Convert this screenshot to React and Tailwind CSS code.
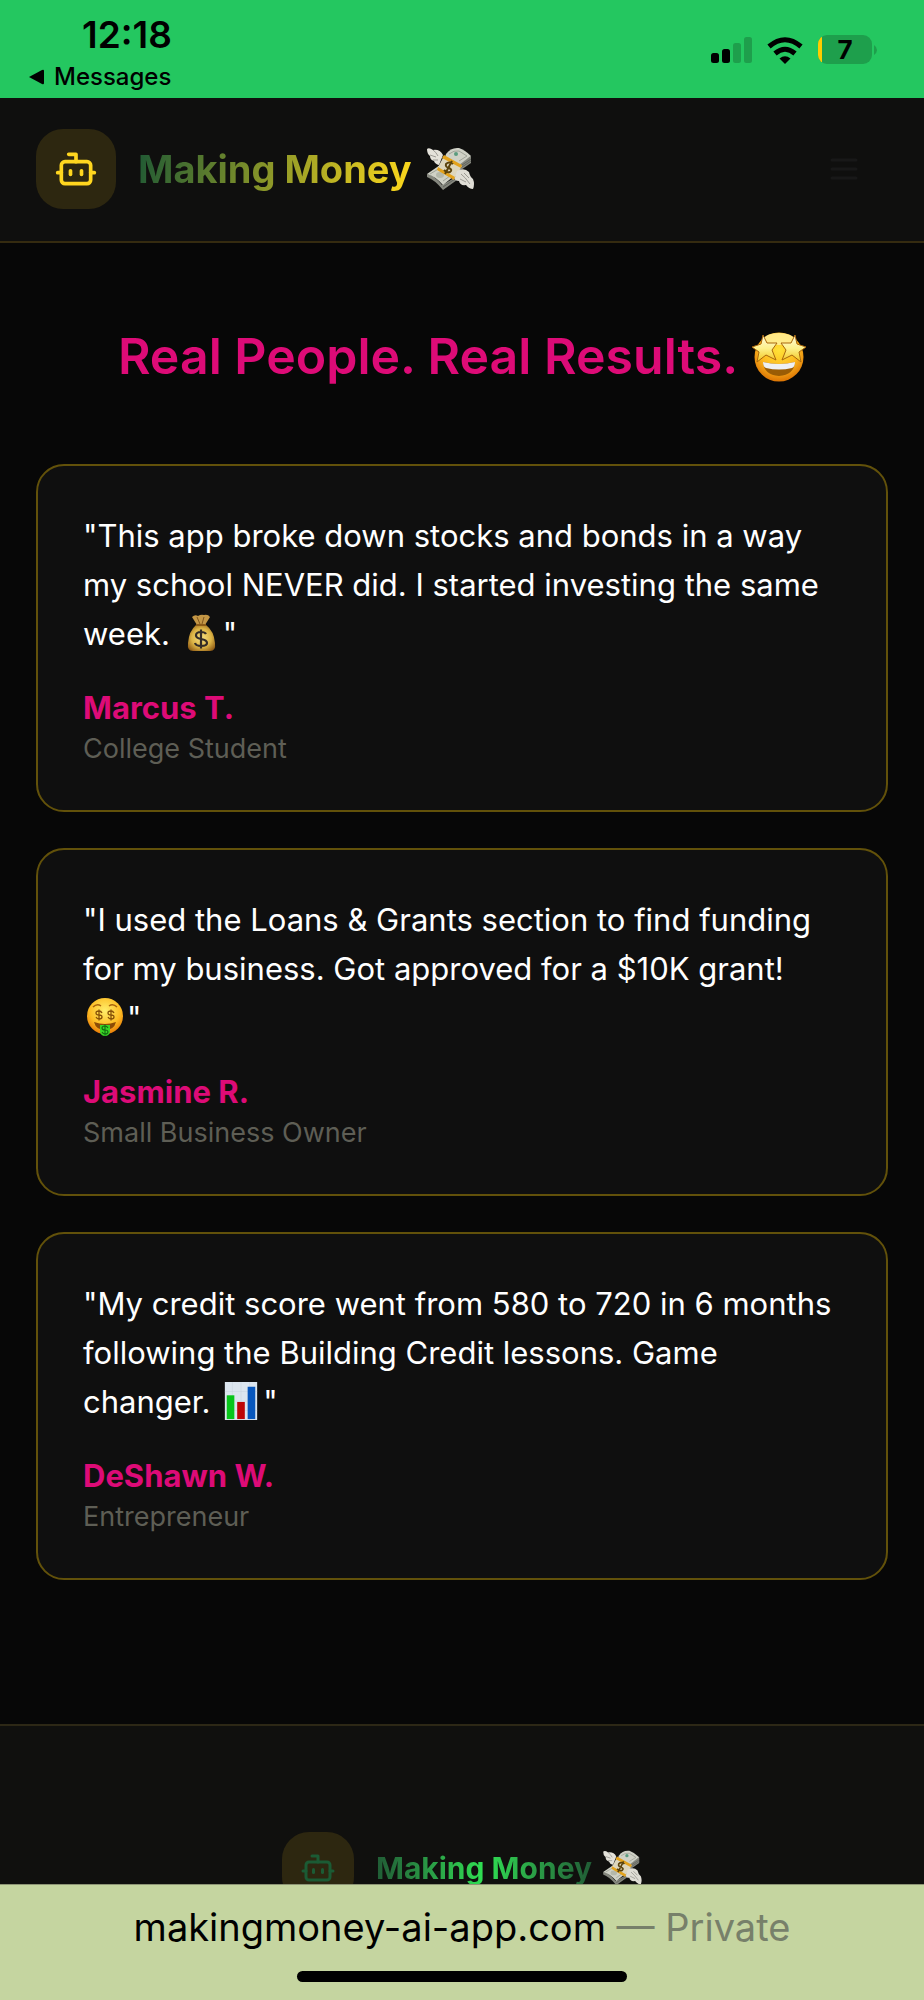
import { Bot } from "lucide-react";

const testimonials = [
  {
    quote: "This app broke down stocks and bonds in a way my school NEVER did. I started investing the same week.",
    Emoji: MoneyBag,
    name: "Marcus T.",
    role: "College Student",
  },
  {
    quote: "I used the Loans & Grants section to find funding for my business. Got approved for a $10K grant!",
    Emoji: MoneyFace,
    name: "Jasmine R.",
    role: "Small Business Owner",
  },
  {
    quote: "My credit score went from 580 to 720 in 6 months following the Building Credit lessons. Game changer.",
    Emoji: BarChart,
    name: "DeShawn W.",
    role: "Entrepreneur",
  },
];

function FlyingMoney({ className }) {
  return (
    <svg viewBox="0 0 48 44" className={className} role="img" aria-label="money with wings">
      {/* bundle */}
      <path d="M1 27 Q8 28 16 38 L30 30 L31 33 L17 43 Q9 33 1 30 Z" fill="#85877e" />
      <path d="M1 27 L14 18 L28 29 L17 38 Q9 29 1 27 Z" fill="#cfd1c6" />
      <path d="M4 27 L14 21 L24 29 L17 34" fill="none" stroke="#a0a398" strokeWidth="1" />
      <path d="M33 17 L45 9 V16 L32 25 Z" fill="#85877e" />
      <path d="M20 7 Q25 0 33 1 Q39 3 45 9 L33 18 L19 10 Z" fill="#cfd1c6" />
      <path d="M23 7 Q28 3 33 4 L41 9 L33 14" fill="none" stroke="#a0a398" strokeWidth="1" />
      <path d="M33 20 L45 12 M33 22 L45 14 M17 40 L29 32" stroke="#62655e" strokeWidth="1" />
      <circle cx="30" cy="7" r="2" fill="#5b9c80" />
      <ellipse cx="14" cy="28" rx="4" ry="3" fill="#b4b8ab" />
      {/* paper band */}
      <path d="M18 9 L36 19 L28 32 L11 22 Z" fill="#ddd6bd" />
      <path d="M18 8 L36 18 L35 21 L16 11 Z" fill="#e3a21c" />
      <path d="M12 20 L29 30 L28 33 L11 23 Z" fill="#e3a21c" />
      <path
        d="M27 17 Q23 14 20 17 Q19 20 23 21 Q27 23 24 25 Q21 26 18 23 M26 14 L19 27"
        fill="none"
        stroke="#5b430d"
        strokeWidth="2"
      />
      {/* wings */}
      <path d="M1 2 Q3 0 7 3 Q14 2 17 8 L13 18 Q9 17 8 14 Q4 13 4 9 Q1 7 1 2 Z" fill="#e4e2da" />
      <path d="M7 3 Q10 5 12 9 M4 8 L10 10 M7 13 L12 13" stroke="#9c9a93" strokeWidth="1" fill="none" />
      <path d="M31 24 Q38 20 43 25 Q44 30 47 32 Q49 37 47 42 Q43 42 40 38 Q34 39 33 34 Q28 34 29 30 Z" fill="#dfddd5" />
      <path d="M35 27 Q39 30 44 37 M34 32 L40 35 M38 26 L43 31" stroke="#9b9992" strokeWidth="1" fill="none" />
    </svg>
  );
}

function StarStruck({ className }) {
  return (
    <svg viewBox="0 0 54 50" className={className} role="img" aria-label="star-struck">
      <defs>
        <radialGradient id="starFace" cx="50%" cy="36%" r="64%">
          <stop offset="0" stopColor="#ffe237" />
          <stop offset="0.6" stopColor="#fdb81f" />
          <stop offset="1" stopColor="#dc7404" />
        </radialGradient>
        <linearGradient id="starFill" x1="0" y1="0" x2="0" y2="1">
          <stop offset="0" stopColor="#fffbe0" />
          <stop offset="0.5" stopColor="#fdf08a" />
          <stop offset="1" stopColor="#f2c41c" />
        </linearGradient>
      </defs>
      <circle cx="27" cy="25" r="24.5" fill="url(#starFace)" />
      <ellipse cx="27" cy="7" rx="15" ry="6" fill="#fff2a0" opacity="0.8" />
      <path d="M11 30 Q27 34 43 30 Q42 43 27 44 Q12 43 11 30 Z" fill="#9a5c05" />
      <path d="M11 30 Q27 34 43 30 Q43 35 40 36 Q27 39 14 36 Q11 35 11 30 Z" fill="#eef0f3" />
      <path
        d="M11 3 L15 11 L25 11 L20 18 L24 28 L14 23 L5 30 L7 20 L0 15 L9 12 Z"
        fill="url(#starFill)"
        stroke="#a8660c"
        strokeWidth="1"
        strokeLinejoin="round"
      />
      <path
        d="M43 3 L39 11 L29 11 L34 18 L30 28 L40 23 L49 30 L47 20 L54 15 L45 12 Z"
        fill="url(#starFill)"
        stroke="#a8660c"
        strokeWidth="1"
        strokeLinejoin="round"
      />
    </svg>
  );
}

function MoneyBag({ className }) {
  return (
    <svg viewBox="0 0 38 38" className={className} role="img" aria-label="money bag">
      <defs>
        <radialGradient id="bag" cx="50%" cy="50%" r="60%">
          <stop offset="0" stopColor="#f7e083" />
          <stop offset="0.6" stopColor="#dcb445" />
          <stop offset="1" stopColor="#936018" />
        </radialGradient>
      </defs>
      <path d="M15 11 L10 3 Q13 0 16 2 Q19 0 22 1 Q26 0 28 3 L23 11 Z" fill="#c39645" />
      <path d="M15 3 L18 10 M22 3 L20 10" stroke="#80551d" strokeWidth="1" />
      <path d="M14 11 L24 11 Q32 17 33 29 Q34 37 28 37 L11 37 Q5 37 6 29 Q7 17 14 11 Z" fill="url(#bag)" />
      <path d="M14 11 L24 11" stroke="#8a5a18" strokeWidth="2" />
      <path
        d="M24 20 Q23 18 19 18 Q14 18 14 21.5 Q14 24 19 25 Q25 26 25 29 Q25 32 19 32 Q14 32 13 29 M19 15.5 V34.5"
        fill="none"
        stroke="#332c27"
        strokeWidth="2.2"
      />
    </svg>
  );
}

function MoneyFace({ className }) {
  return (
    <svg viewBox="0 0 38 38" className={className} role="img" aria-label="money-mouth face">
      <defs>
        <radialGradient id="moneyFace" cx="50%" cy="35%" r="65%">
          <stop offset="0" stopColor="#ffee6b" />
          <stop offset="0.65" stopColor="#fdbd24" />
          <stop offset="1" stopColor="#e87c08" />
        </radialGradient>
        <path
          id="dollar"
          d="M3 -2 Q2 -4 0 -4 Q-3 -4 -3 -2 Q-3 0 0 0 Q3 0 3 2 Q3 4 0 4 Q-2 4 -3 2 M0 -5.5 V5.5"
          fill="none"
        />
      </defs>
      <circle cx="19" cy="18" r="18" fill="url(#moneyFace)" />
      <path d="M7 9 Q11 5 15 8 M23 8 Q27 5 31 9" fill="none" stroke="#a9640d" strokeWidth="1.5" />
      <use href="#dollar" x="13" y="17" stroke="#875108" strokeWidth="1.3" />
      <use href="#dollar" x="25" y="17" stroke="#875108" strokeWidth="1.3" />
      <path d="M8 24 Q19 28 30 24 Q28 32 19 32 Q10 32 8 24 Z" fill="#8b4b07" />
      <path d="M14 27 L24 27 L24 34 Q23 38 19 38 Q15 38 14 34 Z" fill="#39d526" />
      <use href="#dollar" x="19" y="32" stroke="#126b13" strokeWidth="1.1" />
    </svg>
  );
}

function BarChart({ className }) {
  return (
    <svg viewBox="0 0 38 40" className={className} role="img" aria-label="bar chart">
      <rect x="2" y="0" width="34" height="40" fill="#dce6ef" />
      <path d="M2 10H36M2 20H36M2 30H36M10 0V40M19 0V40M28 0V40" stroke="#c7d3df" strokeWidth="0.5" />
      <rect x="4" y="14" width="8" height="25" fill="#07c51a" />
      <rect x="15" y="21" width="8" height="18" fill="#bd0606" />
      <rect x="26" y="5" width="8" height="34" fill="#0757bd" />
    </svg>
  );
}

function SignalIcon() {
  return (
    <svg viewBox="0 0 41 26" className="h-[26px] w-[41px]" aria-hidden="true">
      <rect x="0" y="16" width="8" height="10" rx="2.5" />
      <rect x="11" y="12" width="8" height="14" rx="2.5" />
      <rect x="22" y="6" width="8" height="20" rx="2.5" fill="#1e9f4c" />
      <rect x="33" y="0" width="8" height="26" rx="2.5" fill="#1e9f4c" />
    </svg>
  );
}

function WifiIcon() {
  return (
    <svg viewBox="0 0 36 27" className="h-[27px] w-9" aria-hidden="true">
      <g fill="none" stroke="#000" strokeWidth="5">
        <path d="M2 9.5 Q18 -4 34 9.5" />
        <path d="M8 16.5 Q18 8 28 16.5" />
      </g>
      <path d="M12.5 21.5 Q18 17 23.5 21.5 L18 27 Z" />
    </svg>
  );
}

function BatteryIcon() {
  return (
    <svg viewBox="0 0 60 30" className="h-[30px] w-[60px]" role="img" aria-label="7 percent battery">
      <defs>
        <clipPath id="battery">
          <rect x="0" y="0" width="54" height="29" rx="9" />
        </clipPath>
      </defs>
      <g clipPath="url(#battery)">
        <rect width="54" height="29" fill="#1e9f4c" />
        <rect width="4" height="29" fill="#ffcc00" />
      </g>
      <path d="M56 10 Q59 12 59 15 Q59 18 56 20 Z" fill="#1e9f4c" />
      <text x="27" y="24" fontSize="26" fontWeight="700" textAnchor="middle">7</text>
    </svg>
  );
}

function StatusBar() {
  return (
    <div className="flex h-[98px] shrink-0 items-start justify-between bg-[#24c760] pl-7 pr-[46px] text-black">
      <div>
        <div className="pl-[54px] pt-4 text-[37px] font-semibold leading-[38px]">12:18</div>
        <a href="#messages" className="flex items-center gap-[10px] pt-[9px] text-[24px] font-medium leading-7">
          <svg viewBox="0 0 16 16" className="h-4 w-4" aria-hidden="true">
            <path d="M1 8 L14 1 Q16 0 16 2 V14 Q16 16 14 15 Z" />
          </svg>
          Messages
        </a>
      </div>
      <div className="flex items-center gap-[15px] pt-[35px]">
        <SignalIcon />
        <WifiIcon />
        <BatteryIcon />
      </div>
    </div>
  );
}

function App() {
  return (
    <div className="flex h-screen flex-col overflow-hidden bg-[#070707] font-['Inter',sans-serif] text-white">
      <StatusBar />

      <div className="min-h-0 flex-1 overflow-y-auto [scrollbar-width:none]">
        {/* Header */}
        <header className="flex items-center justify-between border-b-2 border-[#352b10] bg-[#0f0f0e] px-9 pb-8 pt-[31px]">
          <a href="#home" className="flex items-center gap-[22px]">
            <span className="flex h-20 w-20 items-center justify-center rounded-[27px] bg-[#2d2710]">
              <Bot className="h-11 w-11 text-[#ffd61f]" />
            </span>
            <span className="flex items-center gap-[14px] text-[38px] font-bold leading-[52px]">
              <span className="bg-linear-100/srgb from-[#1f5934] to-[#ffd91c] bg-clip-text text-transparent">
                Making Money
              </span>
              <FlyingMoney className="h-11 w-12" />
            </span>
          </a>
          <button type="button" aria-label="Open menu" className="mr-[26px] text-[#181818]">
            <svg viewBox="0 0 24 24" className="h-9 w-9" fill="none" stroke="currentColor" strokeWidth="2" strokeLinecap="round">
              <path d="M4 6h16M4 12h16M4 18h16" />
            </svg>
          </button>
        </header>

        {/* Testimonials */}
        <main className="px-9 pb-36 pt-[79px]">
          <h1 className="mb-[73px] flex items-center justify-center gap-[14px] text-[50px] font-semibold leading-[69px] text-[#dd0b77]">
            Real People. Real Results.
            <StarStruck className="h-[50px] w-[54px]" />
          </h1>
          <div className="flex flex-col gap-9">
            {testimonials.map(({ quote, Emoji, name, role }) => (
              <article key={name} className="rounded-[28px] border-2 border-[#62510a] bg-[#0f0f0f] px-[45px] pb-11 pt-[45px]">
                <p className="text-[31px] leading-[49px]">
                  {`"${quote} `}
                  <span className="whitespace-nowrap">
                    <Emoji className="mx-[3px] -mt-2 inline-block h-[38px] w-[38px] align-middle" />
                    "
                  </span>
                </p>
                <p className="mt-[26px] text-[31px] font-bold leading-[47px] text-[#dd0b77]">{name}</p>
                <p className="text-[27px] leading-[35px] text-[#5e5e55]">{role}</p>
              </article>
            ))}
          </div>
        </main>

        {/* Footer */}
        <footer className="flex justify-center border-t-2 border-[#2d2816] bg-[#10100e] py-[106px]">
          <a href="#home" className="flex items-center gap-[22px]">
            <span className="flex h-[72px] w-[72px] items-center justify-center rounded-[27px] bg-[#2d2710]">
              <Bot className="h-9 w-9 text-[#1b5b34]" />
            </span>
            <span className="flex items-center gap-[10px] text-[30px] font-bold leading-[44px]">
              <span className="bg-linear-to-r from-[#205c35] via-[#2fe052] to-[#205c35] bg-clip-text text-transparent">
                Making Money
              </span>
              <FlyingMoney className="h-9 w-10" />
            </span>
          </a>
        </footer>
      </div>

      {/* Browser bar */}
      <div className="flex shrink-0 flex-col items-center border-t border-[#8d9575] bg-[#c5d5a0] pb-[18px] text-black">
        <p className="pb-[21px] pt-[19px] text-[38px] leading-[46px]">
          makingmoney-ai-app.com <span className="text-[#77806a]">— Private</span>
        </p>
        <div className="h-[11px] w-[330px] rounded-full bg-black" />
      </div>
    </div>
  );
}

export default App;
